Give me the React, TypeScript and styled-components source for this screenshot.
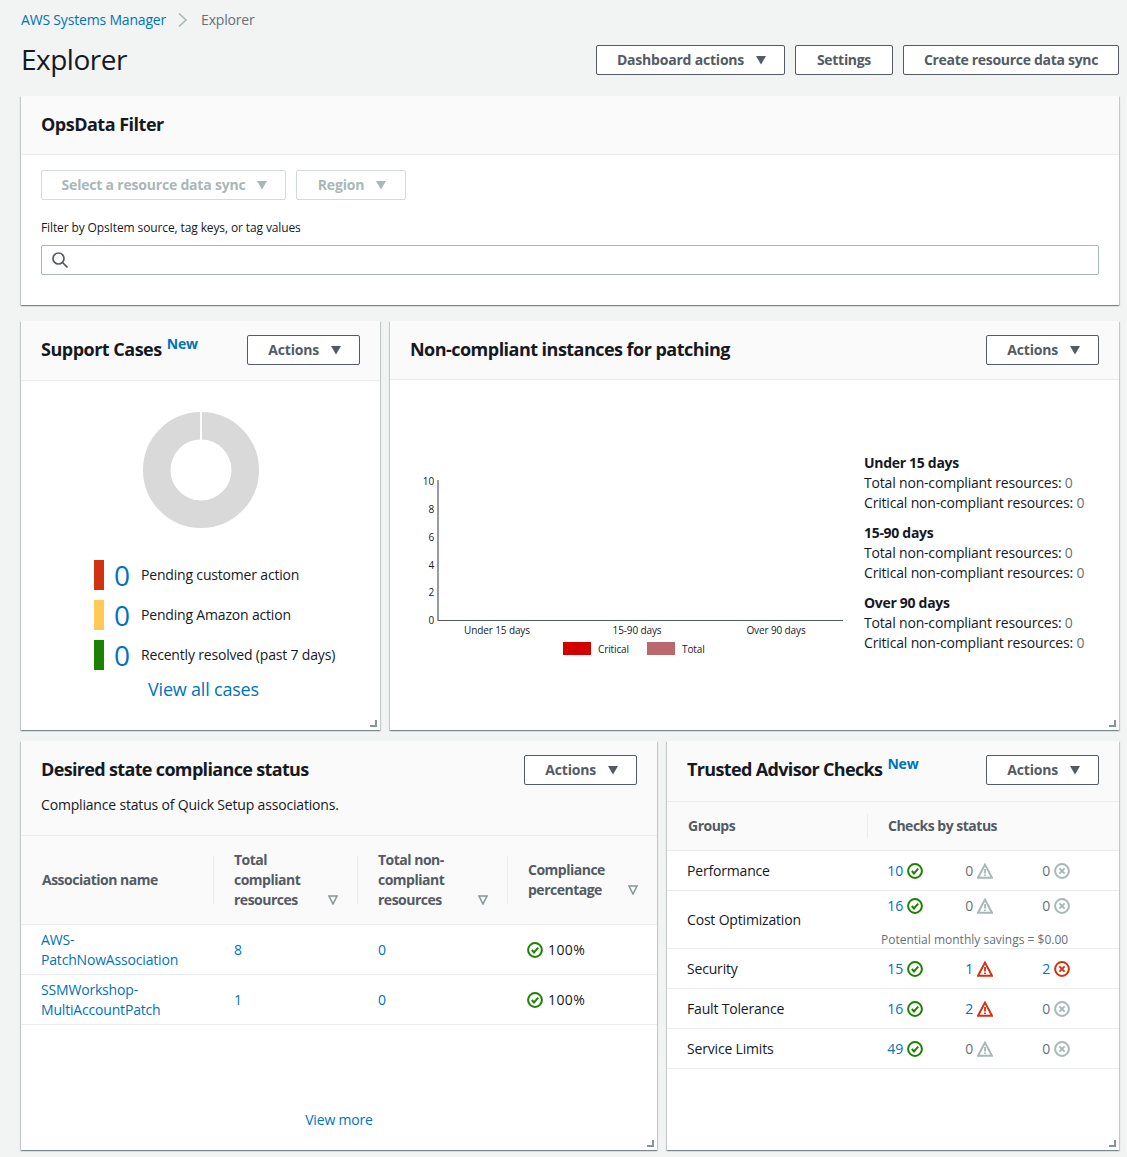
import React from "react";
import styled, { createGlobalStyle } from "styled-components";

const Global = createGlobalStyle`
  html, body { margin: 0; padding: 0; background: #f2f3f3; }
  body { font-family: "Open Sans", "Noto Sans", sans-serif; font-size: 14px; line-height: 20px; color: #16191f; letter-spacing: -0.18px; }
  * { box-sizing: border-box; }
`;

const Page = styled.div`
  width: 1127px; height: 1157px; padding: 10px 8px 0 21px; overflow: hidden;
`;
const Crumbs = styled.nav`
  display: flex; align-items: center; height: 20px; color: #687078; font-size: 14px;
`;
const Link = styled.a<{ $size?: number }>`
  color: #0073bb; text-decoration: none; font-size: ${(p) => p.$size ?? 14}px;
`;
const CrumbArrow = styled.svg`
  width: 12px; height: 16px; margin: 0 12px 0 11px; fill: none; stroke: #aab7b8; stroke-width: 1.6;
`;
const TitleRow = styled.div`
  display: flex; justify-content: space-between; align-items: center; height: 40px; margin: 10px 0 16px;
`;
const PageTitle = styled.h1`
  margin: 0; padding-bottom: 2px; font-size: 28px; line-height: 38px; font-weight: 400; color: #16191f; letter-spacing: -0.5px;
`;
const ButtonRow = styled.div`
  display: flex; gap: 10px;
`;
const Button = styled.div<{ $off?: boolean; $w?: number }>`
  display: inline-flex; align-items: center; justify-content: center; gap: 12px; height: 30px; padding: 0 20px;
  ${(p) => p.$w && `width: ${p.$w}px;`}
  border: 1px solid ${(p) => (p.$off ? "#d5dbdb" : "#545b64")}; border-radius: 2px; background: #fff;
  color: ${(p) => (p.$off ? "#aab7b8" : "#545b64")}; font-weight: 700; font-size: 14px; white-space: nowrap; letter-spacing: -0.3px;
`;
const MenuButton = styled(Button)`
  padding-right: 18px; letter-spacing: -0.2px;
`;
const CaretSvg = styled.svg`
  width: 10px; height: 10px; fill: currentColor; flex: none;
`;
const Caret = () => (
  <CaretSvg viewBox="0 0 10 10"><path d="M0 1h10L5 9.500z" /></CaretSvg>
);
const Card = styled.section<{ $h: number }>`
  position: relative; display: flex; flex-direction: column; height: ${(p) => p.$h}px; background: #fff; min-width: 0;
  box-shadow: 0 1px 1px 0 rgba(0,28,36,.3), 1px 1px 1px 0 rgba(0,28,36,.15), -1px 1px 1px 0 rgba(0,28,36,.15);
`;
const CardHead = styled.header<{ $h: number }>`
  flex: none; height: ${(p) => p.$h}px; padding: 14px 20px 0; background: #fafafa; border-bottom: 1px solid #eaeded;
`;
const HeadRow = styled.div`
  display: flex; justify-content: space-between; align-items: flex-start; min-height: 30px;
`;
const CardTitle = styled.h2<{ $ls?: number }>`
  margin: 0; font-size: 18px; line-height: 28px; font-weight: 700; color: #16191f; white-space: nowrap; letter-spacing: ${(p) => p.$ls ?? -0.5}px;
`;
const NewTag = styled.sup`
  font-size: 14px; line-height: 14px; font-weight: 700; color: #0073bb; margin-left: 5px; position: relative; top: -7px; vertical-align: baseline; letter-spacing: -0.18px;
`;
const Grip = styled.svg`
  position: absolute; right: 3px; bottom: 3px; width: 7px; height: 7px; fill: #879596;
`;
const Resize = () => (
  <Grip viewBox="0 0 7 7"><path d="M5 0h2v7H0V5h5z" /></Grip>
);

const FilterBody = styled.div`
  padding: 15px 20px 0;
`;
const FilterButtons = styled.div`
  display: flex; gap: 10px;
`;
const FilterLabel = styled.div`
  font-size: 12px; line-height: 16px; margin: 20px 0 9px; letter-spacing: -0.12px;
`;
const SearchBox = styled.div`
  display: flex; align-items: center; height: 30px; padding-left: 10px; border: 1px solid #aab7b8; border-radius: 2px; background: #fff;
`;
const SearchSvg = styled.svg`
  width: 16px; height: 16px; fill: none; stroke: #545b64; stroke-width: 1.7;
`;
const GridRow = styled.div<{ $cols: string }>`
  display: grid; grid-template-columns: ${(p) => p.$cols}; column-gap: 10px; margin-top: 16px;
`;
const GridRowTight = styled(GridRow)`
  margin-top: 11px;
`;

const SupportBody = styled.div`
  display: flex; flex-direction: column; padding-top: 30px;
`;
const Donut = styled.svg`
  display: block; width: 118px; height: 118px; margin: 0 0 31px 121px;
`;
const LegendList = styled.div`
  display: flex; flex-direction: column; gap: 10px; padding-left: 73px;
`;
const LegendRow = styled.div`
  display: flex; align-items: center; height: 30px;
`;
const LegendBar = styled.span<{ $c: string }>`
  width: 10px; height: 30px; background: ${(p) => p.$c}; margin-right: 10px;
`;
const LegendNum = styled.span`
  width: 16px; margin-right: 11px; font-size: 28px; color: #0073bb;
`;
const ViewAll = styled.div`
  padding: 9px 0 0 127px; line-height: 20px; letter-spacing: -0.2px;
`;

const PatchBody = styled.div`
  display: flex; padding: 72px 0 0 19px;
`;
const ChartSvg = styled.svg`
  display: block; flex: none; width: 435px; height: 210px;
`;
const Summary = styled.div`
  display: flex; flex-direction: column; gap: 10px; margin: 1px 0 0 20px;
`;
const SummaryGroup = styled.div``;
const SummaryHead = styled.div`
  font-weight: 700; letter-spacing: -0.3px;
`;
const SummaryLine = styled.div`
  white-space: nowrap;
`;
const Zero = styled.span`
  color: #687078;
`;

const Intro = styled.div`
  margin-top: 10px; line-height: 20px;
`;
const THead = styled.div<{ $h: number; $cols: string }>`
  display: grid; grid-template-columns: ${(p) => p.$cols}; align-items: center; height: ${(p) => p.$h}px;
  background: #fafafa; border-bottom: 1px solid #eaeded; color: #545b64; font-weight: 700; letter-spacing: -0.5px;
`;
const Th = styled.div`
  position: relative; height: 88px; display: flex; align-items: center; padding-left: 21px; line-height: 20px;
`;
const ThSep = styled(Th)`
  &::before { content: ""; position: absolute; left: 0; top: 20px; bottom: 20px; width: 1px; background: #eaeded; }
`;
const SortIcon = styled.svg<{ $down: number }>`
  position: absolute; right: 19px; top: calc(50% + ${(p) => p.$down}px); width: 10px; height: 10px; fill: none; stroke: #879596; stroke-width: 1.5;
`;
const Sort = ({ down }: { down: number }) => (
  <SortIcon $down={down} viewBox="0 0 10 10"><path d="M1 1h8L5 9z" /></SortIcon>
);
const TRow = styled.div<{ $cols: string }>`
  display: grid; grid-template-columns: ${(p) => p.$cols}; align-items: center; height: 50px; border-bottom: 1px solid #eaeded;
`;
const Td = styled.div<{ $pl: number }>`
  padding-left: ${(p) => p.$pl}px; display: flex; align-items: center; gap: 5px;
`;
const Percent = styled.span`
  letter-spacing: 0.4px;
`;
const Fill = styled.div`
  flex: 1; display: flex; align-items: flex-end; justify-content: center; padding-bottom: 20px;
`;

const TaHead = styled.div`
  display: grid; grid-template-columns: 200px 1fr; align-items: center; height: 49px; background: #fafafa;
  border-bottom: 1px solid #eaeded; color: #545b64; font-weight: 700; letter-spacing: -0.5px;
`;
const TaHeadCell = styled.div<{ $sep?: boolean }>`
  display: flex; align-items: center; height: 24px; padding-left: ${(p) => (p.$sep ? 20 : 21)}px;
  ${(p) => p.$sep && `border-left: 1px solid #eaeded;`}
`;
const TaRow = styled.div<{ $h?: number }>`
  display: grid; grid-template-columns: 200px 1fr; align-items: center; height: ${(p) => p.$h ?? 40}px;
  border-bottom: 1px solid #eaeded; padding-left: 20px;
`;
const Stats = styled.div`
  display: grid; grid-template-columns: 36px 70px 77px;
`;
const Stat = styled.div`
  display: flex; align-items: center; justify-content: flex-end; gap: 4px; height: 20px;
`;
const StatWrap = styled.div<{ $pad?: boolean }>`
  display: flex; flex-direction: column; padding-top: ${(p) => (p.$pad ? 4 : 0)}px;
`;
const Savings = styled.div`
  font-size: 12px; line-height: 16px; color: #687078; margin: 16px 0 0 -6px; white-space: nowrap; letter-spacing: 0;
`;
const StatNum = styled.span<{ $link?: boolean }>`
  color: ${(p) => (p.$link ? "#0073bb" : "#687078")};
`;
const HeadLines = styled.span``;

type Tone = "ok" | "warn" | "err" | "mutedWarn" | "mutedErr";
const tones: Record<Tone, string> = { ok: "#1d8102", warn: "#d13212", err: "#d13212", mutedWarn: "#aab7b8", mutedErr: "#aab7b8" };
const IconSvg = styled.svg`
  display: block; flex: none; width: 16px; height: 16px; fill: none; stroke-width: 2;
`;
const StatusIcon = ({ tone }: { tone: Tone }) => {
  const c = tones[tone];
  if (tone === "ok")
    return (
      <IconSvg viewBox="0 0 16 16" stroke={c}>
        <circle cx="8" cy="8" r="6.9" />
        <path d="M4.8 8l2.2 2.4L11.2 5.6" />
      </IconSvg>
    );
  if (tone === "warn" || tone === "mutedWarn")
    return (
      <IconSvg viewBox="0 0 16 16" stroke={c}>
        <path d="M8 1.6L15 14.8H1z" strokeLinejoin="miter" />
        <path d="M8 6v4.4M8 11.4v1.6" strokeWidth="1.8" />
      </IconSvg>
    );
  return (
    <IconSvg viewBox="0 0 16 16" stroke={c}>
      <circle cx="8" cy="8" r="6.9" />
      <path d="M5.4 5.4l5.2 5.2M10.6 5.4l-5.2 5.2" />
    </IconSvg>
  );
};

const ta = [
  { name: "Performance", a: 10, b: 0, c: 0 },
  { name: "Cost Optimization", a: 16, b: 0, c: 0, saving: true },
  { name: "Security", a: 15, b: 1, c: 2 },
  { name: "Fault Tolerance", a: 16, b: 2, c: 0 },
  { name: "Service Limits", a: 49, b: 0, c: 0 },
];
const desired = [
  { a: "AWS-", b: "PatchNowAssociation", n: 8 },
  { a: "SSMWorkshop-", b: "MultiAccountPatch", n: 1 },
];
const summary = ["Under 15 days", "15-90 days", "Over 90 days"];
const cols = "192px 144px 150px 150px";

const ChartText = styled.text`
  font-family: "Open Sans", sans-serif; font-size: 10px; fill: #16191f; letter-spacing: -0.12px;
`;

export default function App() {
  return (
    <Page>
      <Global />
      <Crumbs>
        <Link>AWS Systems Manager</Link>
        <CrumbArrow viewBox="0 0 12 16"><path d="M2 1.500L9 8l-7 6.500" /></CrumbArrow>
        Explorer
      </Crumbs>
      <TitleRow>
        <PageTitle>Explorer</PageTitle>
        <ButtonRow>
          <MenuButton $w={189}>Dashboard actions <Caret /></MenuButton>
          <Button $w={98}>Settings</Button>
          <Button $w={216}>Create resource data sync</Button>
        </ButtonRow>
      </TitleRow>

      <Card $h={209}>
        <CardHead $h={59}>
          <CardTitle>OpsData Filter</CardTitle>
        </CardHead>
        <FilterBody>
          <FilterButtons>
            <MenuButton $off $w={245}>Select a resource data sync <Caret /></MenuButton>
            <MenuButton $off $w={110}>Region <Caret /></MenuButton>
          </FilterButtons>
          <FilterLabel>Filter by OpsItem source, tag keys, or tag values</FilterLabel>
          <SearchBox>
            <SearchSvg viewBox="0 0 16 16"><circle cx="6.500" cy="6.500" r="5.500" /><path d="M10.500 10.500L15.500 15.500" /></SearchSvg>
          </SearchBox>
        </FilterBody>
      </Card>

      <GridRow $cols="359px 729px">
        <Card $h={409}>
          <CardHead $h={60}>
            <HeadRow>
              <CardTitle>Support Cases<NewTag>New</NewTag></CardTitle>
              <MenuButton>Actions <Caret /></MenuButton>
            </HeadRow>
          </CardHead>
          <SupportBody>
            <Donut viewBox="0 0 118 118">
              <circle cx="59" cy="59" r="44.250" fill="none" stroke="#d9d9d9" strokeWidth="27.500" />
              <path d="M59 0v30" stroke="#fff" strokeWidth="2" />
            </Donut>
            <LegendList>
              <LegendRow><LegendBar $c="#d13212" /><LegendNum>0</LegendNum>Pending customer action</LegendRow>
              <LegendRow><LegendBar $c="#ffc857" /><LegendNum>0</LegendNum>Pending Amazon action</LegendRow>
              <LegendRow><LegendBar $c="#1d8102" /><LegendNum>0</LegendNum>Recently resolved (past 7 days)</LegendRow>
            </LegendList>
            <ViewAll><Link $size={18}>View all cases</Link></ViewAll>
          </SupportBody>
          <Resize />
        </Card>
        <Card $h={409}>
          <CardHead $h={59}>
            <HeadRow>
              <CardTitle $ls={-0.53}>Non-compliant instances for patching</CardTitle>
              <MenuButton>Actions <Caret /></MenuButton>
            </HeadRow>
          </CardHead>
          <PatchBody>
            <ChartSvg viewBox="0 0 435 210">
              <path d="M29 28V168.500H434" fill="none" stroke="#545b64" strokeWidth="1.2" />
              {["10", "8", "6", "4", "2", "0"].map((t, i) => (
                <ChartText key={t} x="25" y={[33, 61, 89, 117, 144, 172][i]} textAnchor="end">{t}</ChartText>
              ))}
              <ChartText x="88" y="182" textAnchor="middle">Under 15 days</ChartText>
              <ChartText x="228" y="182" textAnchor="middle">15-90 days</ChartText>
              <ChartText x="367" y="182" textAnchor="middle">Over 90 days</ChartText>
              <rect x="154" y="190" width="28" height="13" fill="#d40000" />
              <ChartText x="189" y="201">Critical</ChartText>
              <rect x="238" y="190" width="28" height="13" fill="#bc666d" />
              <ChartText x="273" y="201">Total</ChartText>
            </ChartSvg>
            <Summary>
              {summary.map((s) => (
                <SummaryGroup key={s}>
                  <SummaryHead>{s}</SummaryHead>
                  <SummaryLine>Total non-compliant resources: <Zero>0</Zero></SummaryLine>
                  <SummaryLine>Critical non-compliant resources: <Zero>0</Zero></SummaryLine>
                </SummaryGroup>
              ))}
            </Summary>
          </PatchBody>
          <Resize />
        </Card>
      </GridRow>

      <GridRowTight $cols="636px 452px">
        <Card $h={409}>
          <CardHead $h={95}>
            <HeadRow>
              <CardTitle $ls={-0.66}>Desired state compliance status</CardTitle>
              <MenuButton>Actions <Caret /></MenuButton>
            </HeadRow>
            <Intro>Compliance status of Quick Setup associations.</Intro>
          </CardHead>
          <THead $h={89} $cols={cols}>
            <Th>Association name</Th>
            <ThSep><HeadLines>Total<br />compliant<br />resources</HeadLines><Sort down={15} /></ThSep>
            <ThSep><HeadLines>Total non-<br />compliant<br />resources</HeadLines><Sort down={15} /></ThSep>
            <ThSep><HeadLines>Compliance<br />percentage</HeadLines><Sort down={5} /></ThSep>
          </THead>
          {desired.map((d) => (
            <TRow key={d.a} $cols={cols}>
              <Td $pl={20}><Link>{d.a}<br />{d.b}</Link></Td>
              <Td $pl={21}><Link>{d.n}</Link></Td>
              <Td $pl={21}><Link>0</Link></Td>
              <Td $pl={20}><StatusIcon tone="ok" /><Percent>100%</Percent></Td>
            </TRow>
          ))}
          <Fill><Link>View more</Link></Fill>
          <Resize />
        </Card>
        <Card $h={409}>
          <CardHead $h={61}>
            <HeadRow>
              <CardTitle $ls={-0.65}>Trusted Advisor Checks<NewTag>New</NewTag></CardTitle>
              <MenuButton>Actions <Caret /></MenuButton>
            </HeadRow>
          </CardHead>
          <TaHead>
            <TaHeadCell>Groups</TaHeadCell>
            <TaHeadCell $sep>Checks by status</TaHeadCell>
          </TaHead>
          {ta.map((r) => (
            <TaRow key={r.name} $h={r.saving ? 58 : 40}>
              <span>{r.name}</span>
              <StatWrap $pad={r.saving}>
                <Stats>
                  <Stat><StatNum $link>{r.a}</StatNum><StatusIcon tone="ok" /></Stat>
                  <Stat><StatNum $link={r.b > 0}>{r.b}</StatNum><StatusIcon tone={r.b > 0 ? "warn" : "mutedWarn"} /></Stat>
                  <Stat><StatNum $link={r.c > 0}>{r.c}</StatNum><StatusIcon tone={r.c > 0 ? "err" : "mutedErr"} /></Stat>
                </Stats>
                {r.saving && <Savings>Potential monthly savings = $0.00</Savings>}
              </StatWrap>
            </TaRow>
          ))}
          <Resize />
        </Card>
      </GridRowTight>
    </Page>
  );
}
